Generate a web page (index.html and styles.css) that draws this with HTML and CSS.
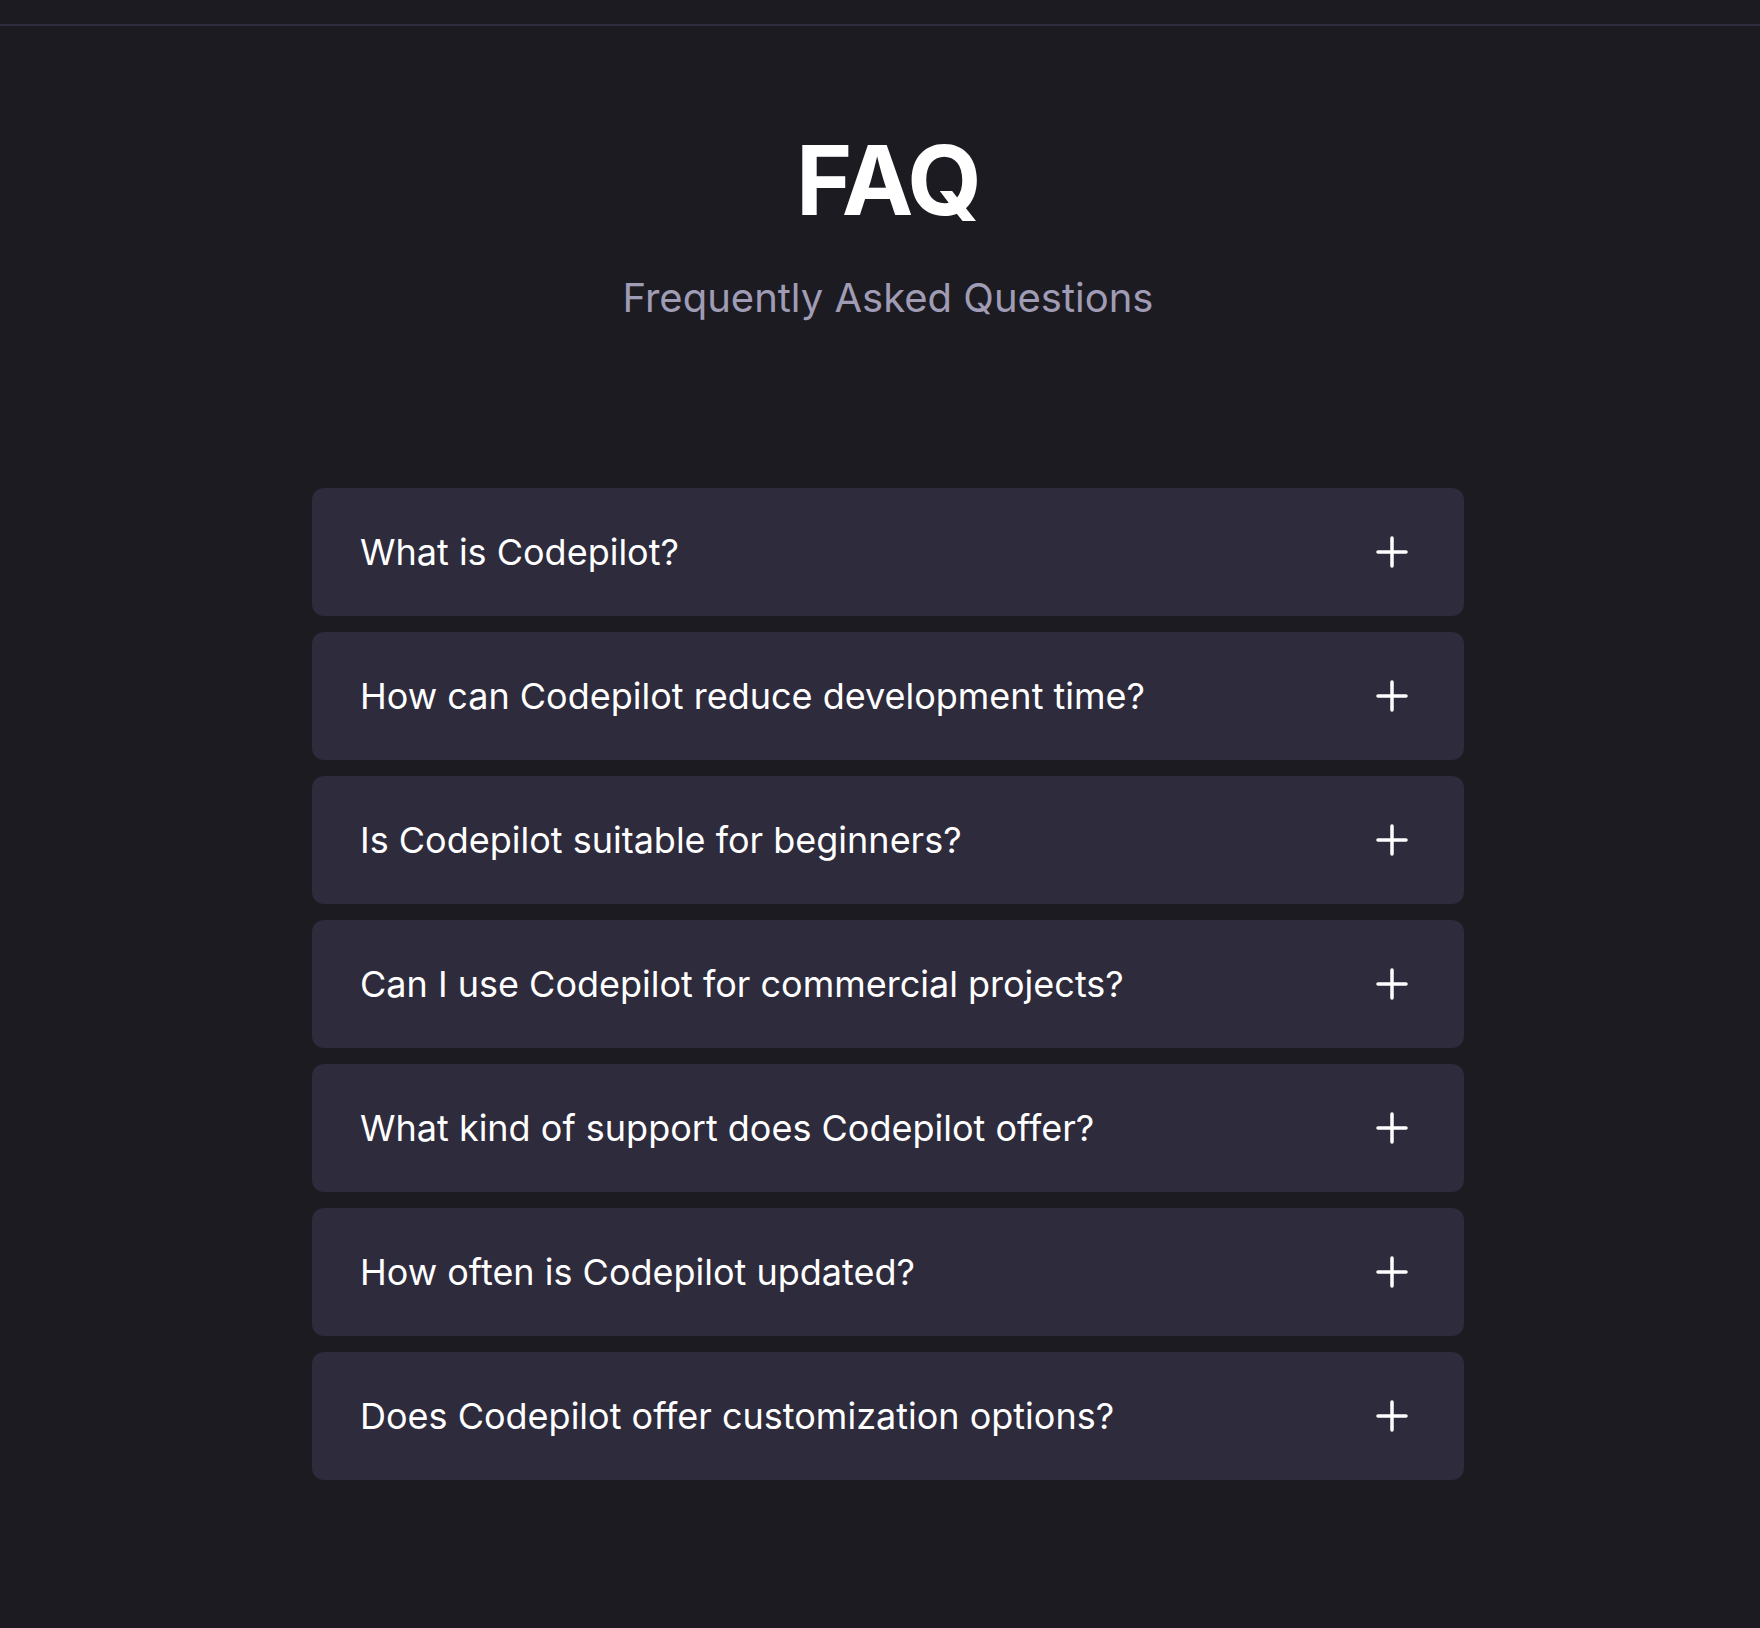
FILE: index.html
```html
<!DOCTYPE html>
<html lang="en">
<head>
    <meta charset="UTF-8">
    <meta name="viewport" content="width=device-width, initial-scale=1.0">
    <title>FAQ - Codepilot</title>
    <link rel="stylesheet" href="styles.css">
</head>
<body>

<div class="topbar"></div>

<section class="faq">
    <h1 class="faq-title">FAQ</h1>
    <p class="faq-subtitle">Frequently Asked Questions</p>

    <div class="faq-list">
        <div class="faq-item">
            <span class="faq-question">What is Codepilot?</span>
            <svg class="faq-icon" viewBox="0 0 32 32"><path d="M2 16h28M16 2v28"/></svg>
        </div>
        <div class="faq-item">
            <span class="faq-question">How can Codepilot reduce development time?</span>
            <svg class="faq-icon" viewBox="0 0 32 32"><path d="M2 16h28M16 2v28"/></svg>
        </div>
        <div class="faq-item">
            <span class="faq-question">Is Codepilot suitable for beginners?</span>
            <svg class="faq-icon" viewBox="0 0 32 32"><path d="M2 16h28M16 2v28"/></svg>
        </div>
        <div class="faq-item">
            <span class="faq-question">Can I use Codepilot for commercial projects?</span>
            <svg class="faq-icon" viewBox="0 0 32 32"><path d="M2 16h28M16 2v28"/></svg>
        </div>
        <div class="faq-item">
            <span class="faq-question">What kind of support does Codepilot offer?</span>
            <svg class="faq-icon" viewBox="0 0 32 32"><path d="M2 16h28M16 2v28"/></svg>
        </div>
        <div class="faq-item">
            <span class="faq-question">How often is Codepilot updated?</span>
            <svg class="faq-icon" viewBox="0 0 32 32"><path d="M2 16h28M16 2v28"/></svg>
        </div>
        <div class="faq-item">
            <span class="faq-question">Does Codepilot offer customization options?</span>
            <svg class="faq-icon" viewBox="0 0 32 32"><path d="M2 16h28M16 2v28"/></svg>
        </div>
    </div>
</section>

</body>
</html>
```

FILE: styles.css
```css
body {
    font-family: Inter, "Noto Sans", sans-serif;
    margin: 0;
    padding: 0;
    background-color: #1c1b22;
    color: #fff;
}

.topbar {
    height: 24px;
    border-bottom: 2px solid #2e2b3d;
}

.faq {
    padding: 96px 0 80px 16px;
    display: flex;
    flex-direction: column;
    align-items: center;
}

.faq-title {
    margin: 0;
    font-size: 96px;
    font-weight: 700;
    line-height: 116px;
    letter-spacing: -2px;
}

.faq-subtitle {
    margin: 36px 0 0;
    font-size: 40px;
    line-height: 48px;
    color: #a09cb5;
}

.faq-list {
    width: 1152px;
    margin-top: 166px;
    display: flex;
    flex-direction: column;
    gap: 16px;
}

.faq-item {
    height: 128px;
    box-sizing: border-box;
    padding: 0 56px 0 48px;
    display: flex;
    align-items: center;
    justify-content: space-between;
    background-color: #2e2b3d;
    border-radius: 12px;
    cursor: pointer;
}

.faq-question {
    font-size: 36px;
    line-height: 44px;
}

.faq-icon {
    width: 32px;
    height: 32px;
    fill: none;
    stroke: #fff;
    stroke-width: 3.5;
    stroke-linecap: round;
}
```
